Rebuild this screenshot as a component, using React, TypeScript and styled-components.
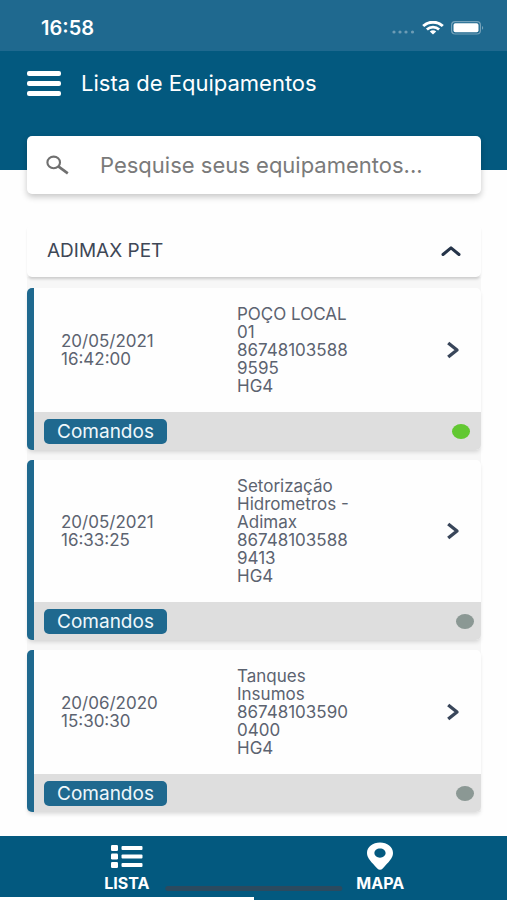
import React, { useState } from "react";
import styled, { createGlobalStyle } from "styled-components";

const color = {
  primary: "#03597f",
  primaryLight: "#1f698f",
  text: "#3e4756",
  muted: "#5c6370",
  placeholder: "#7a7a7a",
  footer: "#dedede",
  online: "#62c832",
  offline: "#8b9894",
};

const GlobalStyle = createGlobalStyle`
  *, *::before, *::after { box-sizing: border-box; }
  body {
    margin: 0;
    background: #fefefe;
    color: ${color.text};
    font-family: Inter, "Liberation Sans", sans-serif;
  }
  button, input { font: inherit; color: inherit; }
  button { border: 0; padding: 0; background: none; cursor: pointer; }
  h1, p { margin: 0; font-weight: 400; }
`;

const Page = styled.div`
  display: flex;
  flex-direction: column;
  min-height: 100vh;
`;

const StatusBar = styled.div`
  display: flex;
  align-items: center;
  justify-content: space-between;
  height: 51px;
  padding: 4px 23px 0 41px;
  background: ${color.primaryLight};
  color: #fff;
`;

const Clock = styled.span`
  font-size: 20px;
  font-weight: 600;
`;

const StatusIcons = styled.div`
  display: flex;
  align-items: center;
  gap: 7px;
`;

const Header = styled.header`
  padding: 0 26px 34px 27px;
  background: ${color.primary};
  color: #fff;
`;

const TitleRow = styled.div`
  display: flex;
  align-items: center;
  gap: 20px;
  height: 64px;
  margin-bottom: 21px;
`;

const MenuButton = styled.button`
  display: flex;
  flex-direction: column;
  gap: 5px;
  width: 34px;
`;

const MenuBar = styled.span`
  width: 100%;
  height: 5px;
  border-radius: 2px;
  background: #fff;
`;

const Title = styled.h1`
  font-size: 22px;
  line-height: 26px;
`;

const SearchBox = styled.label`
  display: flex;
  align-items: center;
  gap: 29px;
  height: 58px;
  margin-bottom: -58px;
  padding: 0 19px;
  border-radius: 5px;
  background: #fff;
  box-shadow: 0 3px 6px rgba(0, 0, 0, 0.22);
`;

const SearchInput = styled.input`
  flex: 1;
  min-width: 0;
  padding: 0;
  border: 0;
  outline: none;
  background: none;
  color: ${color.text};
  font-size: 22px;
  &::placeholder { color: ${color.placeholder}; opacity: 1; }
`;

const Content = styled.main`
  flex: 1;
  padding: 54px 26px 24px 27px;
`;

const GroupHeader = styled.button`
  position: relative;
  display: flex;
  align-items: center;
  justify-content: space-between;
  width: 100%;
  height: 53px;
  padding: 0 19px 0 20px;
  border-radius: 5px;
  background: #fefefe;
  box-shadow: 0 3px 3px -1px rgba(0, 0, 0, 0.18);
  font-size: 19px;
`;

const CardList = styled.div`
  display: flex;
  flex-direction: column;
  gap: 10px;
  padding-top: 11px;
  background: #f7f7f7;
`;

const Card = styled.article`
  overflow: hidden;
  border-left: 7px solid ${color.primaryLight};
  border-radius: 5px;
  background: #fefefe;
  box-shadow: 0 3px 4px -1px rgba(0, 0, 0, 0.14);
`;

const CardBody = styled.div`
  display: grid;
  grid-template-columns: 176fr 119fr 105fr;
  align-items: center;
  padding: 17px 20px 17px 27px;
  color: ${color.muted};
  font-size: 17px;
  line-height: 18px;
`;

const Stamp = styled.time`
  white-space: pre-line;
`;

const Info = styled.p`
  white-space: pre-line;
  overflow-wrap: anywhere;
`;

const OpenButton = styled.button`
  display: flex;
  justify-self: end;
`;

const CardFooter = styled.footer`
  display: flex;
  align-items: center;
  justify-content: space-between;
  height: 38px;
  padding-left: 10px;
  background: ${color.footer};
`;

const CommandButton = styled.button`
  width: 123px;
  height: 25px;
  border-radius: 5px;
  background: ${color.primaryLight};
  color: #f0f8fb;
  font-size: 19px;
  line-height: 25px;
`;

const StatusDot = styled.span<{ $online: boolean }>`
  width: 18px;
  height: 15px;
  margin-right: ${(p) => (p.$online ? 11 : 7)}px;
  border-radius: 50%;
  background: ${(p) => (p.$online ? color.online : color.offline)};
`;

const TabBar = styled.nav`
  position: sticky;
  bottom: 0;
  display: grid;
  grid-template-columns: 1fr 1fr;
  height: 64px;
  background: ${color.primary};
`;

const Tab = styled.button<{ $active: boolean }>`
  display: flex;
  flex-direction: column;
  align-items: center;
  gap: 4px;
  padding-top: 6px;
  border-bottom: 3px solid ${(p) => (p.$active ? "#fff" : "transparent")};
  color: #fff;
  font-size: 16px;
  font-weight: 700;
  line-height: 18px;
`;

const HomeIndicator = styled.span`
  position: absolute;
  bottom: 9px;
  left: 50%;
  width: 35%;
  height: 5px;
  border-radius: 3px;
  background: #2b4a5f;
  transform: translateX(-50%);
`;

const SignalIcon = () => (
  <svg width="23" height="14" viewBox="0 0 23 14" fill="#6d9cb5" aria-hidden="true">
    <circle cx="2" cy="11" r="1.6" />
    <circle cx="8" cy="11" r="1.6" />
    <circle cx="14" cy="11" r="1.6" />
    <circle cx="20.500" cy="11" r="1.6" />
  </svg>
);

const WifiIcon = () => (
  <svg width="22" height="14" viewBox="0 0 22 14" fill="none" stroke="#fff" aria-hidden="true">
    <path d="M1.200 5C6.500-.1 15.500-.1 20.800 5" strokeWidth="2.900" />
    <path d="M4.900 8.500c3.400-3.200 8.800-3.200 12.200 0" strokeWidth="2.700" />
    <path d="M11 13.500l-3.200-3c1.800-1.700 4.600-1.700 6.400 0z" fill="#fff" stroke="none" />
  </svg>
);

const BatteryIcon = () => (
  <svg width="33" height="14" viewBox="0 0 33 14" aria-hidden="true">
    <rect x=".6" y=".6" width="28.800" height="12.400" rx="3.500" fill="none" stroke="#75a2ba" strokeWidth="1.200" />
    <rect x="2.500" y="2.300" width="25" height="9" rx="1.800" fill="#fff" />
    <path d="M31 5c1.600.6 1.600 3.200 0 3.800z" fill="#75a2ba" />
  </svg>
);

const SearchIcon = () => (
  <svg width="25" height="22" viewBox="0 0 25 22" fill="none" stroke="#707070" aria-hidden="true">
    <ellipse cx="7.700" cy="8.400" rx="6.300" ry="5.800" strokeWidth="2.100" />
    <path d="M12.300 12.400l9.500 6.900" strokeWidth="2.700" />
  </svg>
);

const ChevronUpIcon = () => (
  <svg width="22" height="12" viewBox="0 0 22 12" fill="none" stroke="#253449" strokeWidth="3" strokeLinecap="round" strokeLinejoin="round" aria-hidden="true">
    <path d="M3 9.500l8-6.700 8 6.700" />
  </svg>
);

const ChevronRightIcon = () => (
  <svg width="16" height="18" viewBox="0 0 16 18" fill="none" stroke="#39465a" strokeWidth="3.400" strokeLinejoin="round" aria-hidden="true">
    <path d="M3.200 2l8.800 7-8.800 7" />
  </svg>
);

const ListIcon = () => (
  <svg width="32" height="28" viewBox="0 0 32 28" fill="#fff" aria-hidden="true">
    <rect x="0" y="3" width="7" height="6" rx="1.200" />
    <rect x="0" y="11.500" width="7" height="6" rx="1.200" />
    <rect x="0" y="20" width="7" height="6" rx="1.200" />
    <rect x="10.500" y="4" width="21" height="4" rx="1" />
    <rect x="10.500" y="12.500" width="21" height="4" rx="1" />
    <rect x="10.500" y="21" width="21" height="4" rx="1" />
  </svg>
);

const PinIcon = () => (
  <svg width="26" height="28" viewBox="0 0 26 28" fill="#fff" fillRule="evenodd" aria-hidden="true">
    <path d="M13 .5C5.800.5 0 5 0 11c0 5.500 4.500 9 10.300 15.400 1.500 1.700 3.900 1.700 5.400 0C21.500 20 26 16.500 26 11 26 5 20.200.5 13 .5zm0 6c3.200 0 5.600 2 5.600 4.600s-2.400 4.600-5.600 4.600-5.600-2-5.600-4.600 2.400-4.600 5.600-4.600z" />
  </svg>
);

const devices = [
  { date: "20/05/2021", time: "16:42:00", name: "POÇO LOCAL 01", serial: "867481035889595", model: "HG4", online: true },
  { date: "20/05/2021", time: "16:33:25", name: "Setorização Hidrometros - Adimax", serial: "867481035889413", model: "HG4", online: false },
  { date: "20/06/2020", time: "15:30:30", name: "Tanques Insumos", serial: "867481035900400", model: "HG4", online: false },
];

type Device = (typeof devices)[number];

const DeviceCard = ({ device }: { device: Device }) => (
  <Card>
    <CardBody>
      <Stamp>{`${device.date}\n${device.time}`}</Stamp>
      <Info>{`${device.name}\n${device.serial}\n${device.model}`}</Info>
      <OpenButton aria-label={`Abrir ${device.name}`}>
        <ChevronRightIcon />
      </OpenButton>
    </CardBody>
    <CardFooter>
      <CommandButton>Comandos</CommandButton>
      <StatusDot $online={device.online} />
    </CardFooter>
  </Card>
);

export default function App() {
  const [open, setOpen] = useState(true);
  const [tab, setTab] = useState("lista");

  return (
    <Page>
      <GlobalStyle />
      <StatusBar>
        <Clock>16:58</Clock>
        <StatusIcons>
          <SignalIcon />
          <WifiIcon />
          <BatteryIcon />
        </StatusIcons>
      </StatusBar>
      <Header>
        <TitleRow>
          <MenuButton aria-label="Menu">
            <MenuBar />
            <MenuBar />
            <MenuBar />
          </MenuButton>
          <Title>Lista de Equipamentos</Title>
        </TitleRow>
        <SearchBox>
          <SearchIcon />
          <SearchInput type="text" aria-label="Pesquise seus equipamentos" placeholder="Pesquise seus equipamentos..." />
        </SearchBox>
      </Header>
      <Content>
        <GroupHeader aria-expanded={open} onClick={() => setOpen(!open)}>
          ADIMAX PET
          <ChevronUpIcon />
        </GroupHeader>
        {open && (
          <CardList>
            {devices.map((device) => (
              <DeviceCard key={device.serial} device={device} />
            ))}
          </CardList>
        )}
      </Content>
      <TabBar>
        <Tab $active={tab === "lista"} onClick={() => setTab("lista")}>
          <ListIcon />
          LISTA
        </Tab>
        <Tab $active={tab === "mapa"} onClick={() => setTab("mapa")}>
          <PinIcon />
          MAPA
        </Tab>
        <HomeIndicator />
      </TabBar>
    </Page>
  );
}
